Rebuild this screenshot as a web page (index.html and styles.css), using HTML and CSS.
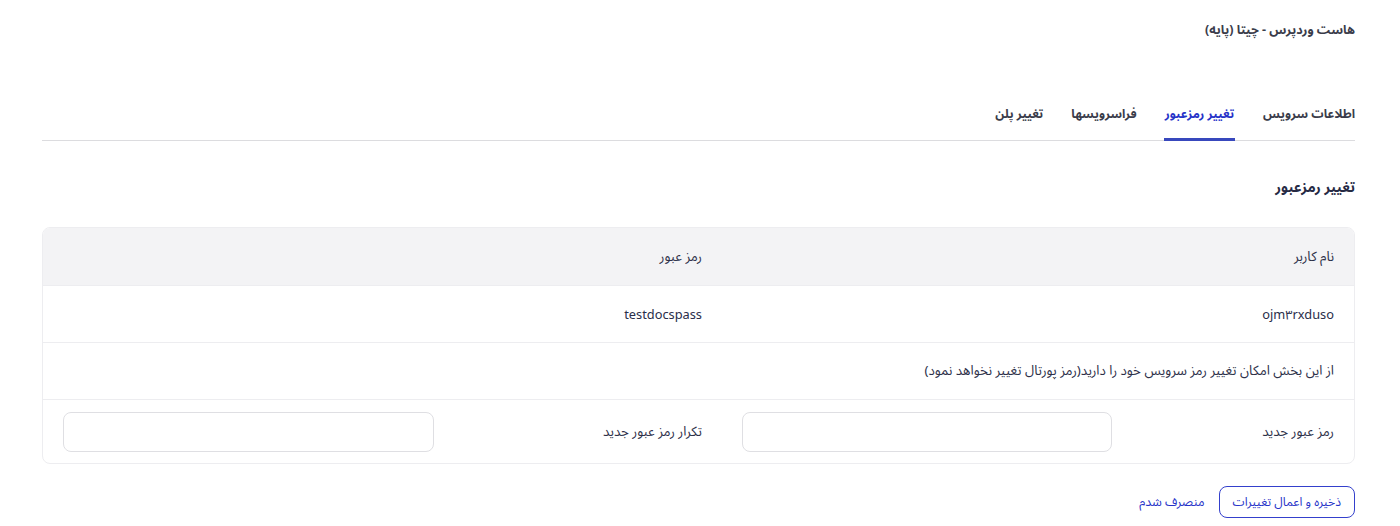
FILE: index.html
```html
<!DOCTYPE html>
<html lang="fa" dir="rtl">
<head>
<meta charset="utf-8">
<link rel="stylesheet" href="styles.css">
</head>
<body>
<div class="page">
  <h1 class="title">هاست وردپرس - چیتا (پایه)</h1>
  <nav class="tabs">
    <a class="tab">اطلاعات سرویس</a>
    <a class="tab active">تغییر رمزعبور</a>
    <a class="tab">فراسرویسها</a>
    <a class="tab">تغییر پلن</a>
  </nav>
  <h2 class="section-title">تغییر رمزعبور</h2>
  <div class="card">
    <div class="row head">
      <div class="cell span2">نام کاربر</div>
      <div class="cell span2">رمز عبور</div>
    </div>
    <div class="row">
      <div class="cell span2 val">ojm۳rxduso</div>
      <div class="cell span2 val">testdocspass</div>
    </div>
    <div class="row">
      <div class="cell span4">از این بخش امکان تغییر رمز سرویس خود را دارید(رمز پورتال تغییر نخواهد نمود)</div>
    </div>
    <div class="row inputs">
      <div class="cell">رمز عبور جدید</div>
      <div class="cell"><input class="field" type="password"></div>
      <div class="cell">تکرار رمز عبور جدید</div>
      <div class="cell"><input class="field" type="password"></div>
    </div>
  </div>
  <div class="actions">
    <button class="btn-save">ذخیره و اعمال تغییرات</button>
    <button class="btn-cancel">منصرف شدم</button>
  </div>
</div>
</body>
</html>
```
FILE: styles.css
```css
* { box-sizing: border-box; }
html, body { margin: 0; padding: 0; background: #fff; }
body {
  font-family: "Noto Sans Arabic", "Noto Sans", sans-serif;
  color: #2d3049;
}
.page {
  padding: 0 45px 0 42px;
}
.title {
  margin: 0;
  padding-top: 19px;
  font-size: 12.5px;
  font-weight: 700;
  line-height: 22px;
  color: #3a3c4a;
}
.tabs {
  display: flex;
  margin-top: 60px;
  border-bottom: 1px solid #dcdcdf;
  height: 40px;
}
.tab {
  font-size: 12.2px;
  font-weight: 700;
  color: #3a3c4a;
  line-height: 22px;
  padding: 2px 0 0 0;
  margin-left: 28px;
  height: 40px;
  border-bottom: 3px solid transparent;
}
.tab.active {
  color: #2733c8;
  border-bottom-color: #3848bd;
  padding: 2px 1px 0;
  margin-left: 27px;
}
.section-title {
  margin: 0;
  padding-top: 36px;
  font-size: 14px;
  font-weight: 700;
  line-height: 22px;
  color: #262a44;
}
.card {
  margin-top: 28px;
  border: 1px solid #ededf0;
  border-radius: 8px;
  overflow: hidden;
}
.row {
  display: grid;
  grid-template-columns: 222px 410px 268px 1fr;
  height: 57px;
  border-top: 1px solid #ededf0;
  align-items: center;
}
.row.head {
  background: #f3f3f5;
  border-top: none;
  height: 57px;
}
.row.inputs { height: 64px; }
.cell {
  padding: 0 20px;
  font-size: 13.3px;
  color: #2d3049;
  white-space: nowrap;
}
.span2 { grid-column: span 2; }
.span4 { grid-column: span 4; }
.val { font-size: 12.8px; color: #2a2e4a; }
.field {
  display: block;
  width: 100%;
  height: 40px;
  border: 1px solid #dfdfe3;
  border-radius: 8px;
  background: #fff;
}
.actions {
  display: flex;
  align-items: center;
  gap: 14px;
  margin-top: 22px;
}
.btn-save {
  font-family: inherit;
  font-size: 12.2px;
  color: #2733c8;
  background: #fff;
  border: 1px solid #3440cc;
  border-radius: 8px;
  height: 32px;
  padding: 0 13px;
}
.btn-cancel {
  font-family: inherit;
  font-size: 12.5px;
  color: #2733c8;
  background: none;
  border: none;
  padding: 0;
}
```
